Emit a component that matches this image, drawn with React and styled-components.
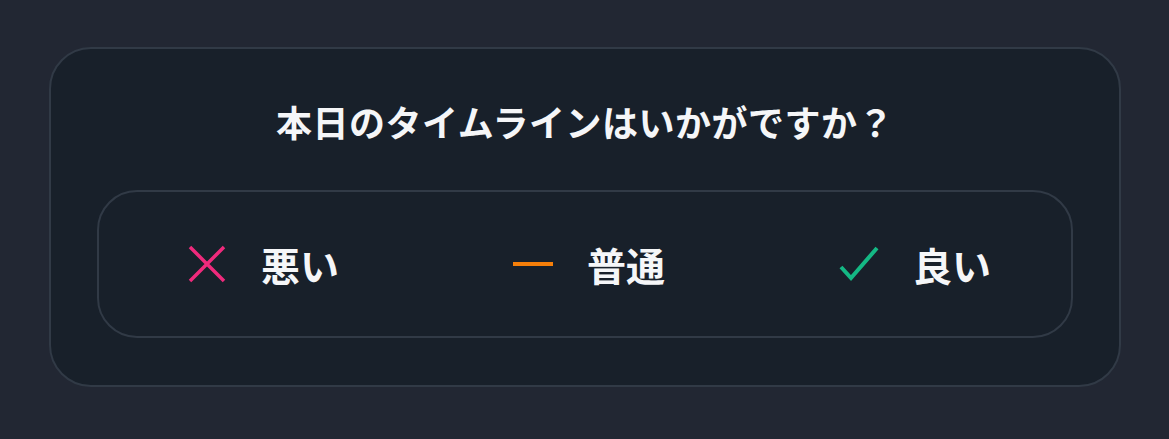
import React from 'react';
import styled, { createGlobalStyle } from 'styled-components';

const GlobalStyle = createGlobalStyle`
  html, body {
    margin: 0;
    padding: 0;
    background-color: #222733;
  }
  body {
    font-family: "Noto Sans CJK JP", "Noto Sans", sans-serif;
  }
`;

const Page = styled.div`
  padding: 47px 48px 53px 49px;
`;

const Card = styled.section`
  background-color: #18202a;
  border: 2px solid #313a46;
  border-radius: 42px;
  padding: 47px 46px 47px;
`;

const Title = styled.h2`
  margin: 0 0 44px;
  color: #f5f6f8;
  font-size: 36px;
  font-weight: 700;
  line-height: 50px;
  text-align: center;
  letter-spacing: 0.5px;
`;

const Choices = styled.div`
  display: flex;
  justify-content: center;
  align-items: center;
  gap: 174px;
  height: 144px;
  padding-left: 8px;
  border: 2px solid #313a46;
  border-radius: 40px;
`;

const Choice = styled.button`
  display: flex;
  align-items: center;
  gap: 34px;
  padding: 0;
  border: none;
  background: none;
  cursor: pointer;
  color: #f5f6f8;
  font-family: inherit;
  font-size: 39px;
  font-weight: 700;
`;

const Icon = styled.svg`
  width: 40px;
  height: 40px;
  flex-shrink: 0;
`;

const BadIcon = () => (
  <Icon viewBox="0 0 40 40" fill="none" stroke="#ef2a7c" strokeWidth="3.5">
    <path d="M3 3 L37 37 M37 3 L3 37" />
  </Icon>
);

const SoSoIcon = () => (
  <Icon viewBox="0 0 40 40" fill="none" stroke="#f57f0a" strokeWidth="4">
    <path d="M0 20 L40 20" />
  </Icon>
);

const GoodIcon = () => (
  <Icon viewBox="0 0 40 40" fill="none" stroke="#14b884" strokeWidth="4">
    <path d="M2 23 L12 34 L38 4" />
  </Icon>
);

const choices = [
  { key: 'bad', label: '悪い', icon: <BadIcon /> },
  { key: 'soso', label: '普通', icon: <SoSoIcon /> },
  { key: 'good', label: '良い', icon: <GoodIcon /> },
];

export default function App() {
  return (
    <>
      <GlobalStyle />
      <Page>
        <Card>
          <Title>本日のタイムラインはいかがですか？</Title>
          <Choices>
            {choices.map((c) => (
              <Choice key={c.key} type="button">
                {c.icon}
                <span>{c.label}</span>
              </Choice>
            ))}
          </Choices>
        </Card>
      </Page>
    </>
  );
}
